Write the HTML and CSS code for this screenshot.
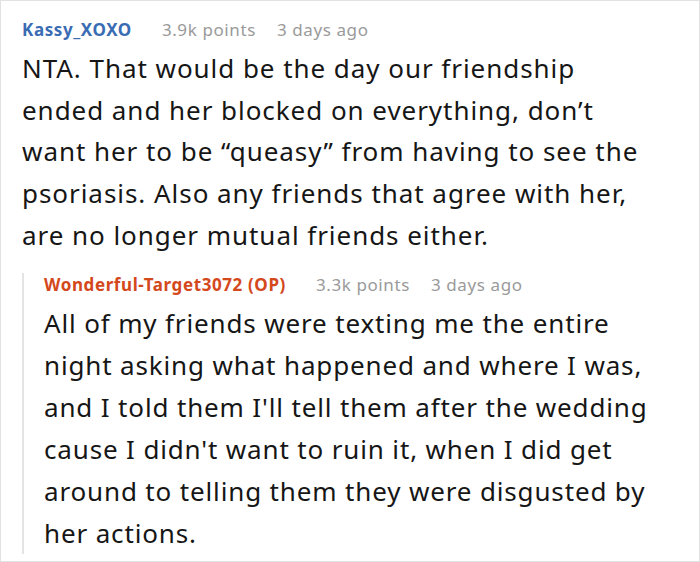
FILE: index.html
```html
<!DOCTYPE html>
<html>
<head>
<meta charset="utf-8">
<link rel="stylesheet" href="styles.css">
</head>
<body>
<div class="frame">
  <div class="comment">
    <div class="meta">
      <span class="user">Kassy_XOXO</span>
      <span class="info">3.9k points</span>
      <span class="info">3 days ago</span>
    </div>
    <p class="body top-body">NTA. That would be the day our friendship ended and her blocked on everything, don’t want her to be “queasy” from having to see the psoriasis. Also any friends that agree with her, are no longer mutual friends either.</p>
    <div class="reply">
      <div class="meta reply-meta">
        <span class="user op">Wonderful-Target3072 (OP)</span>
        <span class="info">3.3k points</span>
        <span class="info">3 days ago</span>
      </div>
      <p class="body reply-body">All of my friends were texting me the entire night asking what happened and where I was, and I told them I'll tell them after the wedding cause I didn't want to ruin it, when I did get around to telling them they were disgusted by her actions.</p>
    </div>
  </div>
</div>
</body>
</html>
```
FILE: styles.css
```css
html, body {
  margin: 0;
  padding: 0;
  background: #fff;
}
.frame {
  box-sizing: border-box;
  width: 700px;
  height: 562px;
  border: 1px solid #e2e2e2;
  padding: 17px 27px 0 21px;
  font-family: "Noto Sans", "Open Sans", sans-serif;
  color: #161616;
  overflow: hidden;
}
.meta {
  display: flex;
  font-size: 17px;
  line-height: 24px;
  letter-spacing: 0.6px;
}
.user {
  font-weight: 700;
  color: #3a6cb4;
  margin-right: 30px;
}
.user.op {
  color: #d4491c;
}
.info {
  color: #9a9a9a;
  margin-right: 21px;
}
.body {
  margin: 0;
  font-size: 26px;
  line-height: 41.7px;
  letter-spacing: 0.85px;
}
.top-body {
  margin-top: 6px;
  padding-right: 24px;
  letter-spacing: 0.95px;
}
.reply {
  margin-top: 26px;
  border-left: 2px solid #e4e4e4;
  padding-left: 20px;
}
.reply-meta {
  margin-top: -10px;
}
.reply-body {
  margin-top: 5px;
  margin-bottom: -11px;
  line-height: 42px;
}
```
